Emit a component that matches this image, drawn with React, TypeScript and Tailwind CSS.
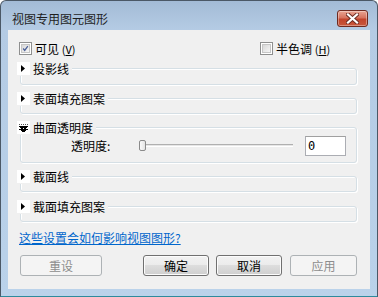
import React from "react";

const font = { fontFamily: '"Noto Sans CJK SC", "Noto Sans", sans-serif' };

function Arrow() {
  return (
    <svg width="5" height="7" viewBox="0 0 5 7" className="block">
      <polygon points="0,0 4,3.5 0,7" fill="#000" />
    </svg>
  );
}

function Collapse() {
  return (
    <svg width="9" height="8" viewBox="0 0 9 8" className="block" shapeRendering="crispEdges">
      <rect x="0" y="0" width="1" height="1" fill="#555" />
      <rect x="2" y="0" width="1" height="1" fill="#555" />
      <rect x="4" y="0" width="1" height="1" fill="#555" />
      <rect x="6" y="0" width="1" height="1" fill="#555" />
      <rect x="8" y="0" width="1" height="1" fill="#555" />
      <rect x="0" y="2" width="9" height="1" fill="#000" />
      <rect x="1" y="3" width="7" height="1" fill="#000" />
      <rect x="2" y="4" width="2" height="1" fill="#000" />
      <rect x="5" y="4" width="2" height="1" fill="#000" />
      <rect x="0" y="5" width="9" height="1" fill="#000" />
      <rect x="2" y="6" width="5" height="1" fill="#000" />
      <rect x="3" y="7" width="3" height="1" fill="#000" />
    </svg>
  );
}

function Group({
  label,
  expanded,
  className,
  children,
}: {
  label: string;
  expanded?: boolean;
  className: string;
  children?: React.ReactNode;
}) {
  return (
    <div
      className={`relative ml-[12px] w-[337px] rounded-[3px] border border-[#d5dfe5] shadow-[inset_1px_1px_0_#fff,1px_1px_0_#fff] ${className}`}
    >
      <div className="absolute left-[-4px] top-[-8px] flex h-[15px] items-center bg-[#f0f0f0] pr-[3px]">
        <div className="flex h-[13px] w-[13px] items-center justify-center bg-white">
          {expanded ? <Collapse /> : <Arrow />}
        </div>
        <span className="ml-[3px] text-[12px] leading-[15px] text-black">{label}</span>
      </div>
      {children}
    </div>
  );
}

function Checkbox({ checked }: { checked?: boolean }) {
  return (
    <div className="flex h-[13px] w-[13px] shrink-0 items-center justify-center border border-[#8e8f8f] bg-white">
      <div className="flex h-[9px] w-[9px] items-center justify-center border border-[#c6c6c6] bg-[linear-gradient(135deg,#d8d8d8,#f6f6f6)]">
        {checked && (
          <svg width="9" height="9" viewBox="0 0 9 9" className="block">
            <path d="M1.5 4.5 L3.5 7 L7.5 1.5" fill="none" stroke="#4a5f97" strokeWidth="1.6" />
          </svg>
        )}
      </div>
    </div>
  );
}

function Button({ label, disabled, w }: { label: string; disabled?: boolean; w: string }) {
  return (
    <div
      className={`flex h-[21px] ${w} items-center justify-center rounded-[3px] border text-[12px] ${
        disabled
          ? "border-[#adb2b5] bg-[#f4f4f4] text-[#8d8d8d]"
          : "border-[#707070] bg-[linear-gradient(#f2f2f2,#ebebeb_50%,#dddddd_50%,#cfcfcf)] text-black shadow-[inset_0_0_0_1px_#fcfcfc]"
      }`}
    >
      {label}
    </div>
  );
}

export default function App() {
  return (
    <div style={font} className="h-[297px] w-[378px] overflow-hidden">
      <div className="flex h-[297px] w-[378px] flex-col rounded-t-[6px] border border-[#4b5866] border-b-[#2d8a9c] bg-[linear-gradient(#a3bbd6,#b4cbe4_28px,#bad2ea)]">
        <div className="flex h-[29px] shrink-0 items-start">
          <div className="ml-[11px] mt-[10px] text-[12px] leading-[16px] text-[#1e1e1e]">视图专用图元图形</div>
          <div className="ml-auto mr-[9px] mt-[9px] flex h-[17px] w-[31px] items-center justify-center rounded-[3px] border border-[#6e2a20] bg-[linear-gradient(#e9a593,#d7735f_45%,#c2442c_55%,#c8573c)] shadow-[inset_0_0_0_1px_rgba(255,255,255,0.35)]">
            <svg width="13" height="11" viewBox="0 0 13 11" className="block">
              <path d="M2 1.5 L11 9.5 M11 1.5 L2 9.5" stroke="#6b2b22" strokeWidth="4" strokeLinecap="square" />
              <path d="M2 1.5 L11 9.5 M11 1.5 L2 9.5" stroke="#fff" strokeWidth="2.2" strokeLinecap="square" />
            </svg>
          </div>
        </div>
        <div className="mx-[7px] flex h-[259px] flex-col bg-[#f0f0f0] pt-[12px] text-[12px] text-black">
          <div className="flex h-[13px] items-center pl-[11px]">
            <Checkbox checked />
            <span className="ml-[3px] w-[225px] leading-[13px]">
              可见 <span className="text-[11px]">(<span className="underline">V</span>)</span>
            </span>
            <Checkbox />
            <span className="ml-[3px] leading-[13px]">
              半色调 <span className="text-[11px]">(<span className="underline">H</span>)</span>
            </span>
          </div>
          <Group label="投影线" className="mt-[13px] h-[17px]" />
          <Group label="表面填充图案" className="mt-[13px] h-[16px]" />
          <Group label="曲面透明度" expanded className="mt-[13px] h-[36px]">
            <div className="flex items-center pl-[50px] pt-[8px]">
              <span className="w-[40px] leading-[14px]">透明度:</span>
              <div className="relative ml-[28px] h-[10px] w-[154px]">
                <div className="absolute left-[2px] right-0 top-[3px] h-[2px] border-t border-[#b0b0b0] bg-[#e6e6e6] shadow-[0_1px_0_#fff]" />
                <div className="absolute left-0 top-[-1px] h-[11px] w-[7px] rounded-[2px] border border-[#8a8a8a] bg-[linear-gradient(90deg,#fafafa,#e4e4e4)]" />
              </div>
              <div className="ml-[12px] flex h-[20px] w-[41px] items-center border border-[#abadb3] border-t-[#a0a0a0] bg-white pl-[2px] text-[12px]" style={{ fontFamily: '"DejaVu Sans Mono", monospace' }}>
                0
              </div>
            </div>
          </Group>
          <Group label="截面线" className="mt-[13px] h-[16px]" />
          <Group label="截面填充图案" className="mt-[14px] h-[16px]" />
          <div className="ml-[11px] mt-[9px] text-[12px] leading-[14px] text-[#0066cc] underline">
            这些设置会如何影响视图图形?
          </div>
          <div className="ml-[12px] mt-[10px] flex">
            <Button label="重设" disabled w="w-[82px]" />
            <div className="ml-[41px]">
              <Button label="确定" w="w-[66px]" />
            </div>
            <div className="ml-[7px]">
              <Button label="取消" w="w-[66px]" />
            </div>
            <div className="ml-[8px]">
              <Button label="应用" disabled w="w-[67px]" />
            </div>
          </div>
        </div>
      </div>
    </div>
  );
}
